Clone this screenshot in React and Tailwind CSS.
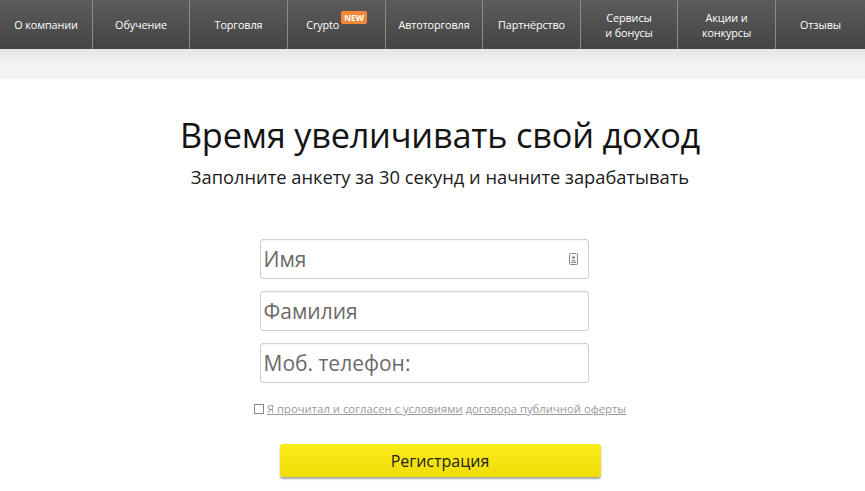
import React from "react";

const MENU = [
  { label: "О компании", w: "w-[93px]" },
  { label: "Обучение", w: "w-[97px]" },
  { label: "Торговля", w: "w-[98px]" },
  { label: "Crypto", w: "w-[98px]", badge: true },
  { label: "Автоторговля", w: "w-[97px]" },
  { label: "Партнёрство", w: "w-[98px]" },
  { label: ["Сервисы", "и бонусы"], w: "w-[97px]" },
  { label: ["Акции и", "конкурсы"], w: "w-[98px]" },
  { label: "Отзывы", w: "flex-1" },
];

function ContactIcon() {
  return (
    <svg width="9" height="12" viewBox="0 0 9 12" className="absolute right-[10px] top-[13px]">
      <rect x="0.5" y="0.5" width="8" height="11" rx="1" fill="#fafafa" stroke="#888" />
      <circle cx="4.5" cy="4.5" r="1.3" fill="#777" />
      <path d="M2.2 8.2 Q4.5 5.8 6.8 8.2 Z" fill="#777" />
      <line x1="2" y1="9.5" x2="7" y2="9.5" stroke="#777" strokeWidth="0.8" />
    </svg>
  );
}

function Field({ placeholder, icon }) {
  return (
    <div className="relative h-[40px] w-[329px] rounded-[3px] border border-[#cfcfcf] bg-white shadow-[inset_0_1px_1px_rgba(0,0,0,0.04)]">
      <input
        placeholder={placeholder}
        className="h-full w-full bg-transparent pl-[3px] text-[21px] text-[#333] placeholder-[#6a6a6a] outline-none"
      />
      {icon && <ContactIcon />}
    </div>
  );
}

export default function App() {
  return (
    <div className="min-h-[491px] w-full bg-white font-['Open_Sans',sans-serif]">
      <nav className="flex h-[49px] bg-gradient-to-b from-[#5c5c5c] to-[#434343]">
        {MENU.map((item, i) => (
          <div
            key={i}
            className={`${item.w} flex items-center justify-center border-r border-[#8a8a8a] text-center text-[10.8px] leading-[15px] tracking-[-0.1px] text-white last:border-r-0`}
          >
            {Array.isArray(item.label) ? (
              <span>
                {item.label[0]}
                <br />
                {item.label[1]}
              </span>
            ) : item.badge ? (
              <span>
                {item.label}
                <span className="relative -top-[8px] ml-[2px] inline-block rounded-[2px] bg-[#f5893a] px-[3px] text-[8.5px] font-bold leading-[13px] text-white">
                  NEW
                </span>
              </span>
            ) : (
              item.label
            )}
          </div>
        ))}
      </nav>
      <div className="h-[30px] bg-gradient-to-b from-[#e4e5e4] via-[#f2f3f2] to-[#f3f4f3]" />

      <main className="flex flex-col items-center pl-[15px]">
        <h1 className="mt-[34px] text-[34.3px] leading-[44px] tracking-[-0.2px] text-[#141414]">
          Время увеличивать свой доход
        </h1>
        <p className="mt-[7px] text-[18.3px] leading-[26px] text-[#1a1a1a]">
          Заполните анкету за 30 секунд и начните зарабатывать
        </p>

        <div className="ml-[-32px] mt-[49px] flex flex-col gap-[12px]">
          <Field placeholder="Имя" icon />
          <Field placeholder="Фамилия" />
          <Field placeholder="Моб. телефон:" />
        </div>

        <label className="mt-[19px] flex items-center gap-[3px] text-[11.3px] leading-[14px] text-[#9a9a9a]">
          <span className="h-[10px] w-[10px] border border-[#888] bg-white" />
          <span>
            <span className="underline">Я прочитал и согласен с условиями</span>{" "}
            <span className="underline">договора публичной оферты</span>
          </span>
        </label>

        <button className="mt-[28px] h-[33px] w-[321px] rounded-[3px] bg-gradient-to-b from-[#fbeb1a] to-[#f1dd05] text-[16px] text-[#222] shadow-[0_2px_2px_rgba(0,0,0,0.35)]">
          Регистрация
        </button>
      </main>
    </div>
  );
}
